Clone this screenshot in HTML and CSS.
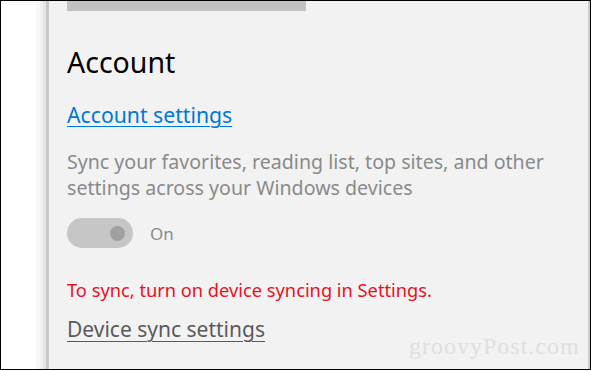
FILE: index.html
```html
<!DOCTYPE html>
<html lang="en">
  <head>
    <meta charset="UTF-8" />
    <title>Account sync</title>
    <link rel="stylesheet" href="styles.css">
  </head>
  <body>
    <div class="frame">
      <div class="gutter"></div>
      <div class="shadow"></div>
      <div class="panel">
        <div class="top-bar"></div>
        <h2 class="heading">Account</h2>
        <a class="link" href="#">Account settings</a>
        <p class="desc">
          Sync your favorites, reading list, top sites, and other<br />
          settings across your Windows devices
        </p>
        <div class="toggle-row">
          <span class="toggle"><span class="knob"></span></span>
          <span class="toggle-label">On</span>
        </div>
        <p class="warning">To sync, turn on device syncing in Settings.</p>
        <a class="link device" href="#">Device sync settings</a>
      </div>
      <!-- watermark sits over the panel -->
      <div class="watermark">groovyPost.com</div>
    </div>
  </body>
</html>
```

FILE: styles.css
```css
body {
  margin: 0;
  background: #fff;
  font-family: "Noto Sans", "Open Sans", sans-serif;
}

.frame {
  position: relative;
  width: 591px;
  height: 370px;
  box-sizing: border-box;
  border: 1px solid #000;
  display: flex;
}

.gutter {
  width: 35px;
  background: #fff;
}

.shadow {
  width: 13px;
  background: linear-gradient(
    to right,
    #f8f8f8 0,
    #f8f8f8 4px,
    #efefef 4px,
    #efefef 7px,
    #e4e4e4 7px,
    #e4e4e4 10px,
    #c8c8c8 10px
  );
}

.panel {
  flex: 1;
  background: #f2f2f2;
  border-right: 2px solid #cccccc;
  padding-left: 18px;
  display: flex;
  flex-direction: column;
  align-items: flex-start;
}

.top-bar {
  width: 239px;
  height: 10px;
  background: #c2c2c2;
}

.heading {
  margin: 34px 0 0;
  font-size: 28.5px;
  font-weight: 400;
  line-height: 34px;
  color: #000;
}

.link {
  margin-top: 22px;
  font-size: 21.2px;
  line-height: 28px;
  color: #0078d7;
  text-decoration: underline;
  text-decoration-thickness: 1px;
  text-underline-offset: 3px;
}

.desc {
  margin: 20px 0 0;
  font-size: 19.6px;
  line-height: 26px;
  color: #8a8a8a;
}

.toggle-row {
  margin-top: 17px;
  display: flex;
  align-items: center;
  gap: 17px;
}

.toggle {
  width: 66px;
  height: 30px;
  border-radius: 15px;
  background: #c6c6c6;
  display: flex;
  align-items: center;
  justify-content: flex-end;
  padding-right: 8px;
  box-sizing: border-box;
}

.knob {
  width: 15px;
  height: 15px;
  border-radius: 50%;
  background: #a0a0a0;
}

.toggle-label {
  font-size: 17px;
  color: #8a8a8a;
}

.warning {
  margin: 30px 0 0;
  font-size: 18.25px;
  line-height: 24px;
  color: #e81123;
}

.link.device {
  margin-top: 13px;
  font-size: 21px;
  color: #5a5a5a;
  text-underline-offset: 4px;
}

.watermark {
  position: absolute;
  left: 408px;
  top: 331px;
  font-family: "Liberation Serif", serif;
  font-size: 24px;
  line-height: 28px;
  letter-spacing: 1px;
  color: #dfdfdf;
}
```
